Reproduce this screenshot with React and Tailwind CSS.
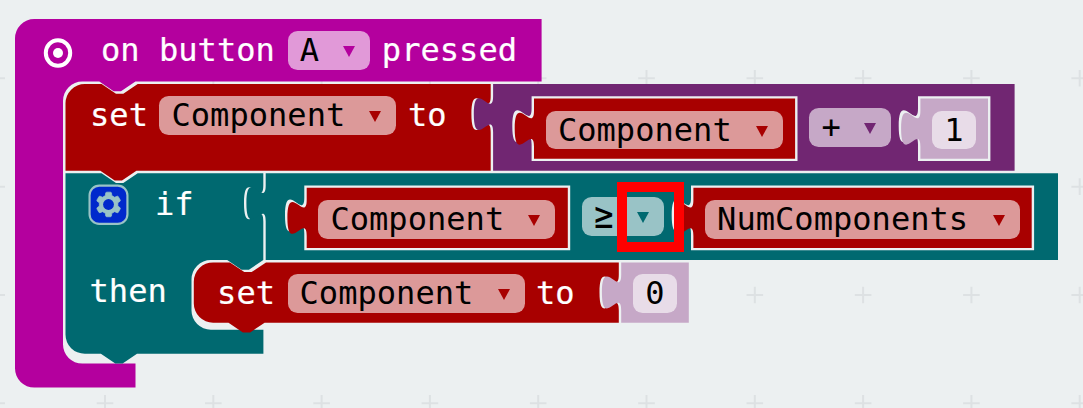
import React from 'react';

const CANVAS = '#ecf0f1';

// Puzzle tab drawn downwards along a left edge, and its reverse
const TAB_DOWN = 'v12 c0,24.1 -19.3,-19.3 -19.3,18.1 s19.3,-6 19.3,18.1';
const TAB_UP = 'c0,-24.1 -19.3,19.3 -19.3,-18.1 s19.3,6 19.3,-18.1 v-12';
const NOTCH_RIGHT = 'l14.4,9.7 h7.3 l14.4,-9.7';
const NOTCH_LEFT = 'l-14.4,9.7 h-7.3 l-14.4,-9.7';

function valuePath(x, y, right, bottom) {
  return `M${x},${y} H${right} V${bottom} H${x} V${y + 48.2} ${TAB_UP} Z`;
}

function InlineValue({ x, y, right, bottom, color }) {
  return (
    <>
      <path d={valuePath(x - 2.4, y - 2.4, right + 2.4, bottom + 2.3)} fill={CANVAS} />
      <path d={valuePath(x, y, right, bottom)} fill={color} />
    </>
  );
}

function Grid() {
  const marks = [];
  for (let i = 0; i <= 10; i += 1) {
    for (let j = 0; j < 4; j += 1) {
      const x = -3.3 + i * 108.3;
      const y = 78.3 + j * 108.35;
      marks.push(`M${x - 8.3},${y}h16.6M${x},${y - 8.3}v16.6`);
    }
  }
  return <path d={marks.join('')} stroke="#dde1e3" strokeWidth="2" fill="none" />;
}

function Blocks() {
  return (
    <svg className="absolute inset-0" width="1083" height="408" viewBox="0 0 1083 408" aria-hidden="true">
      <Grid />
      {/* event block */}
      <path
        fill="#b4009e"
        d={`M15,38.3 a19.3,19.3 0 0 1 19.3,-19.3 H541.6 V81.6 H135.4 ${NOTCH_LEFT} H82.3 a19.3,19.3 0 0 0 -19.3,19.3 V344.3 a19.3,19.3 0 0 0 19.3,19.3 H135.5 V387.6 H34.3 a19.3,19.3 0 0 1 -19.3,-19.3 Z`}
      />
      {/* if block */}
      <path
        fill="#006970"
        d={`M65.5,173.2 H101.6 ${NOTCH_RIGHT} H263.3 ${TAB_DOWN} V260 ${NOTCH_LEFT} H210.8 a19.3,19.3 0 0 0 -19.3,19.3 V310.4 a19.3,19.3 0 0 0 19.3,19.3 H263.4 V353.8 H137 ${NOTCH_LEFT} H84.8 a19.3,19.3 0 0 1 -19.3,-19.3 Z`}
      />
      {/* first assignment */}
      <path
        fill="#a80000"
        d={`M65.5,103.3 a19.3,19.3 0 0 1 19.3,-19.3 H101.6 ${NOTCH_RIGHT} H490.7 ${TAB_DOWN} V170.8 H136.4 ${NOTCH_LEFT} H65.5 Z`}
      />
      <path d={valuePath(493.1, 84, 1014.6, 170.8)} fill="#712672" />
      <InlineValue x={534} y={98.6} right={795.1} bottom={158.8} color="#a80000" />
      <InlineValue x={920.4} y={98.6} right={988} bottom={158.8} color="#c6a8c7" />
      {/* comparison */}
      <path d={valuePath(265.7, 173.2, 1058, 260)} fill="#006970" />
      <InlineValue x={306.7} y={187.8} right={567.8} bottom={248} color="#a80000" />
      <InlineValue x={693.4} y={187.8} right={1031.7} bottom={248} color="#a80000" />
      {/* nested assignment */}
      <path
        fill="#a80000"
        d={`M193.8,281.7 a19.3,19.3 0 0 1 19.3,-19.3 H229.9 ${NOTCH_RIGHT} H618.8 ${TAB_DOWN} V322.7 H264.6 ${NOTCH_LEFT} H213.1 a19.3,19.3 0 0 1 -19.3,-19.3 Z`}
      />
      <path d={valuePath(621.2, 262.4, 688.8, 322.7)} fill="#c6a8c7" />
    </svg>
  );
}

function Arrow() {
  return (
    <svg className="mt-[15px] h-[11px] w-3 shrink-0" viewBox="0 0 12 11">
      <path d="M0 0H12L6 11Z" fill="currentColor" />
    </svg>
  );
}

function Word({ children, className }) {
  return <span className={`shrink-0 whitespace-pre [-webkit-text-stroke:0.2px_white] ${className}`}>{children}</span>;
}

function Dropdown({ label, labelClass = '', className }) {
  return (
    <div className={`flex h-[38.6px] shrink-0 items-start justify-between rounded-[9.6px] pr-[15px] pl-3 ${className}`}>
      <span className={`text-black ${labelClass}`}>{label}</span>
      <Arrow />
    </div>
  );
}

function NumberField({ value, className }) {
  return (
    <div className={`flex h-[38.6px] w-11 shrink-0 justify-center rounded-[9.6px] bg-[#e8dce8] text-black ${className}`}>
      {value}
    </div>
  );
}

function TargetIcon() {
  return (
    <svg className="mt-[7px] ml-[43px] h-[30px] w-[30px] shrink-0" viewBox="0 0 30 30">
      <ellipse cx="15" cy="15" rx="12.2" ry="12.8" fill="none" stroke="#fff" strokeWidth="4" />
      <circle cx="15" cy="15" r="5" fill="#fff" />
    </svg>
  );
}

function GearIcon() {
  return (
    <svg className="-mt-px ml-[88.2px] h-[41px] w-[41px] shrink-0" viewBox="-0.5 -0.5 17 17">
      <rect x="0.15" y="0.15" width="15.7" height="15.9" rx="4" fill="#0029cc" stroke="#99c3c6" strokeWidth="0.9" />
      <path
        fill="#99c3c6"
        stroke="#99c3c6"
        strokeWidth="0.3"
        d="m4.203,7.296 0,1.368 -0.92,0.677 -0.11,0.41 0.9,1.559 0.41,0.11 1.043,-0.457 1.187,0.683 0.127,1.134 0.3,0.3 1.8,0 0.3,-0.299 0.127,-1.138 1.185,-0.682 1.046,0.458 0.409,-0.11 0.9,-1.559 -0.11,-0.41 -0.92,-0.677 0,-1.366 0.92,-0.677 0.11,-0.41 -0.9,-1.559 -0.409,-0.109 -1.046,0.458 -1.185,-0.682 -0.127,-1.138 -0.3,-0.299 -1.8,0 -0.3,0.3 -0.126,1.135 -1.187,0.682 -1.043,-0.457 -0.41,0.11 -0.899,1.559 0.108,0.409z"
      />
      <circle cx="8" cy="8" r="2.25" fill="#0029cc" />
    </svg>
  );
}

export default function App() {
  return (
    <main className="relative h-[408px] w-[1083px] overflow-hidden bg-[#ecf0f1] font-['DejaVu_Sans_Mono',monospace] text-[32.1px] leading-[39px] text-white">
      <Blocks />
      <div className="relative flex flex-col pt-[31px]">
        <div className="flex h-[65.3px] items-start">
          <TargetIcon />
          <Word className="ml-[28px]">on button</Word>
          <Dropdown label="A" className="ml-[13px] w-[82px] bg-[#e199d8] text-[#b4009e]" />
          <Word className="ml-[12px]">pressed</Word>
        </div>
        <div className="flex h-[88.9px] items-start">
          <Word className="ml-[90px]">set</Word>
          <Dropdown label="Component" className="ml-[11.5px] w-[237px] bg-[#dc9999] text-[#a80000]" />
          <Word className="ml-[11.5px]">to</Word>
          <Dropdown label="Component" className="mt-[14.5px] ml-[99.3px] w-[237px] bg-[#dc9999] text-[#a80000]" />
          <Dropdown label="+" className="mt-[12px] ml-[26.5px] w-[82px] bg-[#c6a8c7] text-[#712672]" />
          <NumberField value="1" className="mt-[14.5px] ml-[40.5px]" />
        </div>
        <div className="flex h-[87px] items-start">
          <GearIcon />
          <Word className="ml-[25.8px]">if</Word>
          <Dropdown label="Component" className="mt-[15px] ml-[124.8px] w-[237px] bg-[#dc9999] text-[#a80000]" />
          <Dropdown
            label="≥"
            labelClass="origin-center scale-y-125 -translate-y-[2px]"
            className="mt-[12.3px] ml-[26.5px] w-[82px] bg-[#99c3c6] text-[#006970]"
          />
          <Dropdown label="NumComponents" className="mt-[15px] ml-[41.2px] w-[314.5px] bg-[#dc9999] text-[#a80000]" />
        </div>
        <div className="flex items-start">
          <Word className="ml-[89.5px]">then</Word>
          <Word className="mt-[2.2px] ml-[50.3px]">set</Word>
          <Dropdown label="Component" className="mt-[2.2px] ml-[12.5px] w-[237px] bg-[#dc9999] text-[#a80000]" />
          <Word className="mt-[2.2px] ml-[11.5px]">to</Word>
          <NumberField value="0" className="mt-[2.2px] ml-[58.3px]" />
        </div>
      </div>
      <div className="absolute top-[182px] left-[617px] h-[70px] w-[67px] border-10 border-[#ff0000]" />
    </main>
  );
}
